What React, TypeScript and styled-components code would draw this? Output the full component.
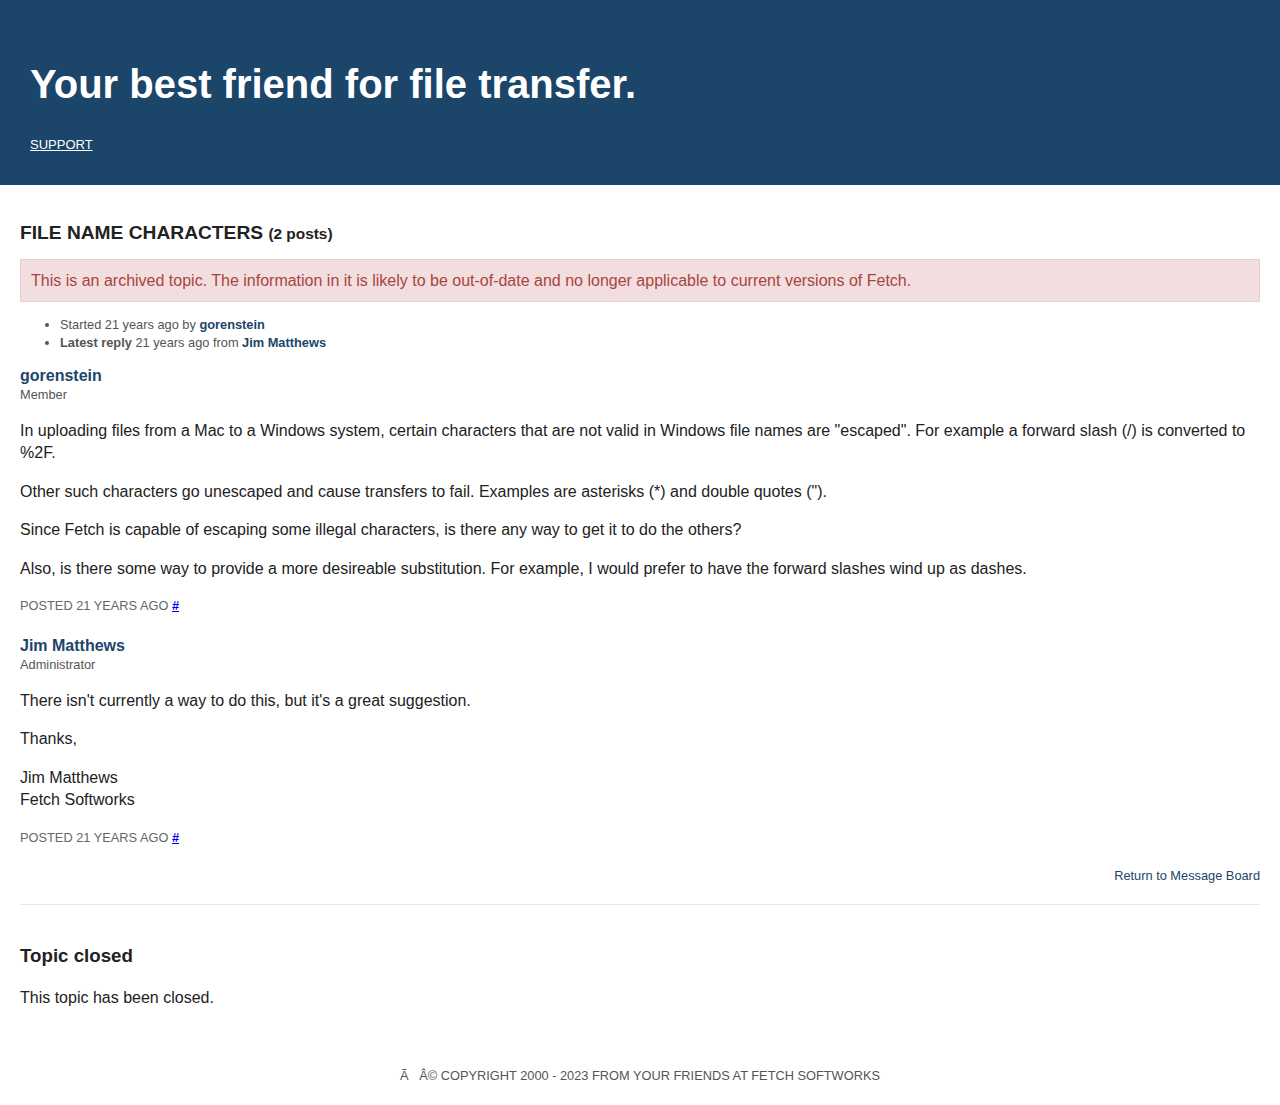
import * as React from "react";
import styled, { createGlobalStyle } from "styled-components";

const Global = createGlobalStyle`
  body {
    margin: 0;
    font-family: "Liberation Sans", Arial, Helvetica, sans-serif;
    color: #222;
    background: #fff;
  }
`;

const Header = styled.header`
  background: #1b4569;
  height: 185px;
  box-sizing: border-box;
  padding: 60px 30px 0;
  color: #fff;
`;
const Title = styled.h1`
  margin: 0;
  font-size: 40px;
  line-height: 48px;
  font-weight: bold;
`;
const NavLink = styled.a`
  display: inline-block;
  margin-top: 29px;
  font-size: 13px;
  color: #fff;
  text-decoration: underline;
`;

const Main = styled.main`
  padding: 36px 20px 0;
`;
const TopicTitle = styled.h2`
  margin: 0 0 13px;
  font-size: 19.2px;
  line-height: 24px;
  font-weight: bold;
  small {
    font-size: 15.4px;
  }
`;
const Alert = styled.div`
  background: #f2dede;
  border: 1px solid #ebccd1;
  color: #a94442;
  font-size: 16px;
  line-height: 21px;
  padding: 10px;
`;
const Meta = styled.ul`
  margin: 14px 0 0;
  padding-left: 40px;
  font-size: 12.8px;
  line-height: 18px;
  color: #555;
`;
const UserLink = styled.a`
  color: #1b4569;
  font-weight: bold;
  text-decoration: none;
`;
const Post = styled.article`
  margin-top: 14px;
`;
const Author = styled.a`
  display: block;
  color: #1b4569;
  font-weight: bold;
  font-size: 16px;
  line-height: 20px;
  text-decoration: none;
`;
const Role = styled.div`
  font-size: 12.8px;
  line-height: 18px;
  color: #555;
`;
const Para = styled.p`
  margin: 16px 0 0;
  font-size: 16px;
  line-height: 1.4;
`;
const Posted = styled.div`
  margin-top: 17px;
  padding-bottom: 7px;
  font-size: 12.8px;
  line-height: 18px;
  color: #666;
  text-transform: uppercase;
  a {
    color: #00e;
    font-weight: bold;
  }
`;
const ReturnRow = styled.div`
  display: flex;
  justify-content: flex-end;
  margin-top: 13px;
  font-size: 12.8px;
  line-height: 18px;
  a {
    color: #1b4569;
    text-decoration: none;
  }
`;
const Rule = styled.hr`
  border: 0;
  border-top: 1px solid #e6e6e6;
  margin: 19px 0 0;
`;
const ClosedTitle = styled.h3`
  margin: 40px 0 20px;
  font-size: 18.72px;
  line-height: 22px;
  font-weight: bold;
`;
const Footer = styled.footer`
  text-align: center;
  font-size: 12.8px;
  line-height: 18px;
  color: #555;
  text-transform: uppercase;
  padding: 58px 0 20px;
`;

export default function App() {
  return (
    <>
      <Global />
      <Header>
        <Title>Your best friend for file transfer.</Title>
        <NavLink href="#">SUPPORT</NavLink>
      </Header>
      <Main>
        <TopicTitle>
          FILE NAME CHARACTERS <small>(2 posts)</small>
        </TopicTitle>
        <Alert>
          This is an archived topic. The information in it is likely to be out-of-date and no longer applicable to current versions of Fetch.
        </Alert>
        <Meta>
          <li>
            Started 21 years ago by <UserLink href="#">gorenstein</UserLink>
          </li>
          <li>
            <b>Latest reply</b> 21 years ago from <UserLink href="#">Jim Matthews</UserLink>
          </li>
        </Meta>
        <Post>
          <Author href="#">gorenstein</Author>
          <Role>Member</Role>
          <Para>
            In uploading files from a Mac to a Windows system, certain characters that are not valid in Windows file names are "escaped". For example a forward slash (/) is converted to %2F.
          </Para>
          <Para>Other such characters go unescaped and cause transfers to fail. Examples are asterisks (*) and double quotes (").</Para>
          <Para>Since Fetch is capable of escaping some illegal characters, is there any way to get it to do the others?</Para>
          <Para>Also, is there some way to provide a more desireable substitution. For example, I would prefer to have the forward slashes wind up as dashes.</Para>
          <Posted>
            Posted 21 years ago <a href="#">#</a>
          </Posted>
        </Post>
        <Post>
          <Author href="#">Jim Matthews</Author>
          <Role>Administrator</Role>
          <Para>There isn't currently a way to do this, but it's a great suggestion.</Para>
          <Para>Thanks,</Para>
          <Para>
            Jim Matthews
            <br />
            Fetch Softworks
          </Para>
          <Posted>
            Posted 21 years ago <a href="#">#</a>
          </Posted>
        </Post>
        <ReturnRow>
          <a href="#">Return to Message Board</a>
        </ReturnRow>
        <Rule />
        <ClosedTitle>Topic closed</ClosedTitle>
        <Para>This topic has been closed.</Para>
      </Main>
      <Footer>Ã&nbsp;&nbsp;&nbsp;Â© Copyright 2000 - 2023 from your friends at Fetch Softworks</Footer>
    </>
  );
}
